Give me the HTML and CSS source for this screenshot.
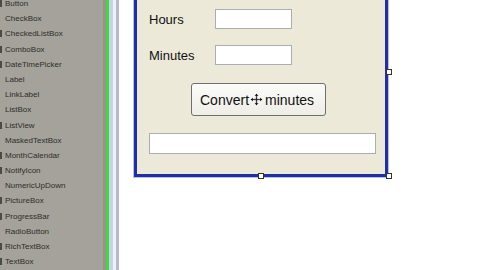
FILE: index.html
```html
<!DOCTYPE html>
<html>
<head>
<meta charset="utf-8">
<link rel="stylesheet" href="styles.css">
</head>
<body>
<div class="screen">
  <div class="toolbox">
    <ul class="items">
      <li><span class="ico"></span>Button</li>
      <li>CheckBox</li>
      <li><span class="ico"></span>CheckedListBox</li>
      <li><span class="ico"></span>ComboBox</li>
      <li><span class="ico"></span>DateTimePicker</li>
      <li>Label</li>
      <li>LinkLabel</li>
      <li>ListBox</li>
      <li><span class="ico"></span>ListView</li>
      <li>MaskedTextBox</li>
      <li><span class="ico"></span>MonthCalendar</li>
      <li><span class="ico"></span>NotifyIcon</li>
      <li>NumericUpDown</li>
      <li><span class="ico"></span>PictureBox</li>
      <li><span class="ico"></span>ProgressBar</li>
      <li>RadioButton</li>
      <li><span class="ico"></span>RichTextBox</li>
      <li><span class="ico"></span>TextBox</li>
    </ul>
  </div>
  <div class="splitter"></div>
  <div class="canvas">
    <div class="form">
      <div class="row">
        <span class="lbl">Hours</span>
        <span class="tb small"></span>
      </div>
      <div class="row gap2">
        <span class="lbl">Minutes</span>
        <span class="tb small"></span>
      </div>
      <div class="btnrow">
        <div class="btn">Convert<svg class="move" width="13" height="13" viewBox="0 0 13 13"><path d="M6.5 0.5 L9 3 H7.3 V5.7 H10 V4 L12.5 6.5 L10 9 V7.3 H7.3 V10 H9 L6.5 12.5 L4 10 H5.7 V7.3 H3 V9 L0.5 6.5 L3 4 V5.7 H5.7 V3 H4 Z" fill="#111" stroke="#fff" stroke-width="0.6"/></svg>minutes</div>
      </div>
      <div class="tb wide"></div>
      <span class="handle h-rm"></span>
      <span class="handle h-bm"></span>
      <span class="handle h-br"></span>
    </div>
  </div>
</div>
</body>
</html>
```

FILE: styles.css
```css
html, body {
  margin: 0;
  padding: 0;
  width: 480px;
  height: 270px;
  overflow: hidden;
  background: #ffffff;
}
.screen {
  display: flex;
  width: 480px;
  height: 270px;
  overflow: hidden;
}
.toolbox {
  width: 103px;
  flex: none;
  background: #a4a29a;
  overflow: hidden;
}
.items {
  list-style: none;
  margin: -4px 0 0 0;
  padding: 0;
  font-family: "Liberation Sans", Arial, sans-serif;
  font-size: 8px;
  color: #2e2e2c;
}
.items li {
  position: relative;
  height: 15.2px;
  line-height: 15.2px;
  padding-left: 5px;
  white-space: nowrap;
}
.ico {
  position: absolute;
  left: 0;
  top: 4px;
  width: 2px;
  height: 7px;
  background: #4a4a48;
}
.splitter {
  width: 16px;
  flex: none;
  background: linear-gradient(to right,
    #96948d 0px, #96948d 3px,
    #46d83a 3px, #46d83a 6px,
    #c4d2ea 6px, #c4d2ea 10px,
    #eef1f6 10px, #eef1f6 13px,
    #b6bac6 13px, #b6bac6 16px);
}
.canvas {
  flex: 1;
  background: #ffffff;
  padding-left: 15px;
}
.form {
  position: relative;
  box-sizing: border-box;
  width: 254px;
  height: 208px;
  margin-top: -31px;
  border: 3px solid #2030a4;
  box-shadow: 0 0 0 1px #b4c2ee;
  background: #ece9d8;
  padding: 37px 0 0 12px;
  font-family: "Liberation Sans", Arial, sans-serif;
}
.row {
  display: flex;
  align-items: center;
  height: 20px;
}
.gap2 {
  margin-top: 16px;
}
.lbl {
  width: 66px;
  font-size: 13px;
  color: #111;
}
.tb {
  display: block;
  box-sizing: border-box;
  background: #ffffff;
  border: 1px solid #a9aeb6;
}
.small {
  width: 77px;
  height: 20px;
}
.btnrow {
  margin-top: 18px;
  padding-left: 42px;
}
.btn {
  box-sizing: border-box;
  width: 135px;
  height: 33px;
  display: flex;
  align-items: center;
  padding-left: 8px;
  border: 1px solid #6f6f6f;
  border-radius: 3px;
  background: linear-gradient(#fbfbf9, #eeede6);
  font-size: 14px;
  color: #111;
  white-space: nowrap;
}
.move {
  margin: 0 2px 0 1px;
}
.wide {
  margin-top: 17px;
  width: 227px;
  height: 21px;
}
.handle {
  position: absolute;
  width: 4px;
  height: 4px;
  background: #ffffff;
  border: 1px solid #333;
}
.h-rm { left: 249px; top: 97px; }
.h-bm { left: 121px; top: 201px; }
.h-br { left: 249px; top: 201px; }
```
